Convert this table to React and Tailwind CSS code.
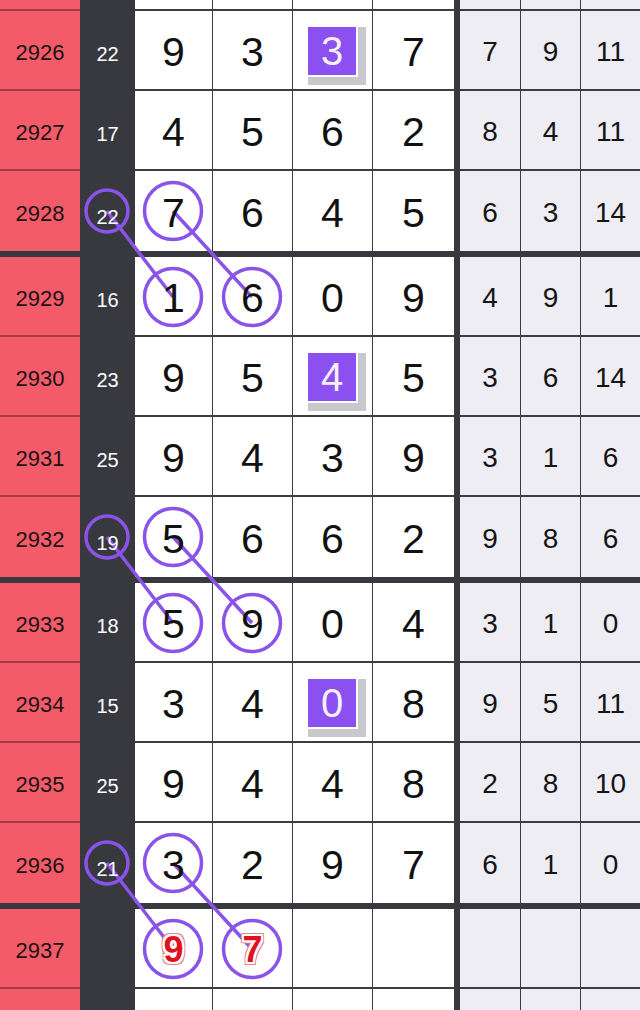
import React from 'react';

const rows = [
  {no: 2926, sum: 22, nums: [9, 3, 3, 7], side: [7, 9, 11], hi: 2},
  {no: 2927, sum: 17, nums: [4, 5, 6, 2], side: [8, 4, 11]},
  {no: 2928, sum: 22, nums: [7, 6, 4, 5], side: [6, 3, 14], end: true},
  {no: 2929, sum: 16, nums: [1, 6, 0, 9], side: [4, 9, 1]},
  {no: 2930, sum: 23, nums: [9, 5, 4, 5], side: [3, 6, 14], hi: 2},
  {no: 2931, sum: 25, nums: [9, 4, 3, 9], side: [3, 1, 6]},
  {no: 2932, sum: 19, nums: [5, 6, 6, 2], side: [9, 8, 6], end: true},
  {no: 2933, sum: 18, nums: [5, 9, 0, 4], side: [3, 1, 0]},
  {no: 2934, sum: 15, nums: [3, 4, 0, 8], side: [9, 5, 11], hi: 2},
  {no: 2935, sum: 25, nums: [9, 4, 4, 8], side: [2, 8, 10]},
  {no: 2936, sum: 21, nums: [3, 2, 9, 7], side: [6, 1, 0], end: true},
  {no: 2937, sum: '', nums: [9, 7, '', ''], side: ['', '', ''], guess: true},
];

// 连线标记：小圈在和值列，大圈在号码列
const marks = [
  {y1: 211, y2: 297},
  {y1: 537, y2: 623},
  {y1: 863, y2: 949},
];

const numW = ['w-[78px] border-r', 'w-[80px] border-r', 'w-[80px] border-r', 'w-[81px]'];
const sideW = ['w-[61px] border-r', 'w-[60px] border-r', 'w-[59px]'];

const redText =
  '[text-shadow:2px_0_0_#fff,-2px_0_0_#fff,0_2px_0_#fff,0_-2px_0_#fff,2px_2px_0_#fff,-2px_-2px_0_#fff,2px_-2px_0_#fff,-2px_2px_0_#fff,3px_0_0_#e8818b,-3px_0_0_#e8818b,0_3px_0_#e8818b,0_-3px_0_#e8818b,3px_3px_0_#e8818b,-3px_-3px_0_#e8818b,3px_-3px_0_#e8818b,-3px_3px_0_#e8818b]';

function Row({row, h, empty}) {
  const bottom = row && row.end ? 'border-b-[6px] border-[#38383f]' : 'border-b-2 border-[#3c3c42]';
  const redBottom = row && row.end ? 'border-b-[6px] border-[#38383f]' : 'border-b-2 border-[#a33c47]';
  return (
    <div className={`flex ${h}`}>
      <div className={`w-[80px] shrink-0 bg-[#f45b69] ${redBottom} flex items-center justify-center pt-[5px] text-[22px] text-[#1b1214]`}>
        {empty ? '' : row.no}
      </div>
      <div className="w-[55px] shrink-0 bg-[#38383f] flex items-center justify-center pt-[5px] text-[20px] text-white">
        <span className="relative z-20">{empty ? '' : row.sum}</span>
      </div>
      {numW.map((w, i) => (
        <div key={i} className={`${w} shrink-0 bg-white ${bottom} border-r-[#3c3c42] flex items-center justify-center pt-[4px]`}>
          {!empty && row.hi === i ? (
            <div className="w-[48px] h-[48px] bg-[#8c4ff0] flex items-center justify-center text-[40px] leading-none text-[#f6f0fa] shadow-[1px_1px_0_1px_#fff,5px_5px_0_5px_#c9c9cd] relative z-20 -ml-[1px] -mt-[3px]">
              {row.nums[i]}
            </div>
          ) : !empty && row.guess ? (
            <span className={`relative z-20 text-[36px] font-bold leading-none text-[#e1121f] ${redText}`}>{row.nums[i]}</span>
          ) : (
            <span className="relative z-20 text-[41px] leading-none text-[#111]">{empty ? '' : row.nums[i]}</span>
          )}
        </div>
      ))}
      <div className="w-[6px] shrink-0 bg-[#38383f]" />
      {sideW.map((w, i) => (
        <div key={i} className={`${w} shrink-0 bg-[#eeedf3] ${bottom} border-r-[#3c3c42] flex items-center justify-center pt-[4px] text-[28px] text-[#141414]`}>
          {empty ? '' : row.side[i]}
        </div>
      ))}
    </div>
  );
}

function App() {
  return (
    <div className="relative w-[640px] h-[1010px] overflow-hidden bg-white font-['Liberation_Sans',Arial,sans-serif]">
      <Row empty h="h-[11px]" />
      {rows.map((r) => (
        <Row key={r.no} row={r} h={r.end ? 'h-[86px]' : 'h-[80px]'} />
      ))}
      <Row empty h="h-[80px]" />

      <svg className="absolute top-0 left-0 z-10 pointer-events-none" width="640" height="1010">
        {marks.map((m, i) => (
          <g key={i} fill="none" stroke="#8a54e8">
            <line x1="107" y1={m.y1} x2="173" y2={m.y2} strokeWidth="3.5" />
            <line x1="173" y1={m.y1} x2="252" y2={m.y2} strokeWidth="3.5" />
            <circle cx="107" cy={m.y1} r="21" strokeWidth="3.5" />
            <circle cx="173" cy={m.y1} r="28.5" strokeWidth="3.5" />
            <circle cx="173" cy={m.y2} r="28.5" strokeWidth="3.5" />
            <circle cx="252" cy={m.y2} r="28.5" strokeWidth="3.5" />
          </g>
        ))}
      </svg>
    </div>
  );
}

export default App;
